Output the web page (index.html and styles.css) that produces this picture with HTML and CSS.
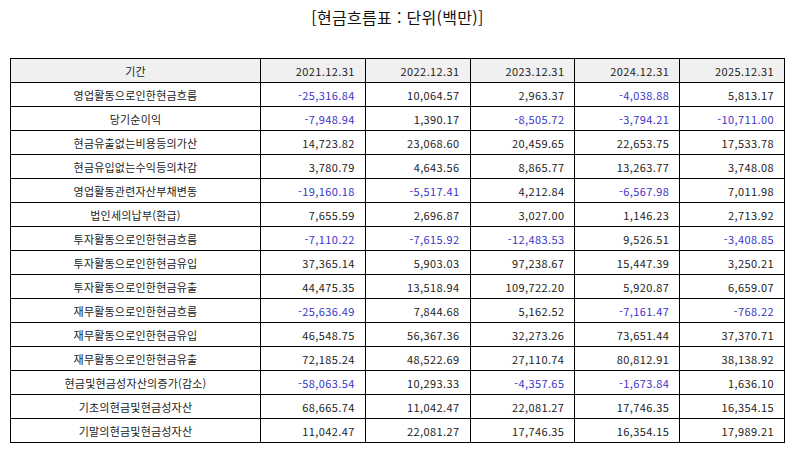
FILE: index.html
```html
<!DOCTYPE html>
<html lang="ko">
<head>
<meta charset="utf-8">
<link rel="stylesheet" href="styles.css">
</head>
<body>
<div class="page">
<h1 class="title">[현금흐름표 : 단위(백만)]</h1>
<table class="cf">
<thead>
<tr><th class="label">기간</th><th>2021.12.31</th><th>2022.12.31</th><th>2023.12.31</th><th>2024.12.31</th><th>2025.12.31</th></tr>
</thead>
<tbody>
<tr><td class="label">영업활동으로인한현금흐름</td><td class="neg">-25,316.84</td><td>10,064.57</td><td>2,963.37</td><td class="neg">-4,038.88</td><td>5,813.17</td></tr>
<tr><td class="label">당기순이익</td><td class="neg">-7,948.94</td><td>1,390.17</td><td class="neg">-8,505.72</td><td class="neg">-3,794.21</td><td class="neg">-10,711.00</td></tr>
<tr><td class="label">현금유출없는비용등의가산</td><td>14,723.82</td><td>23,068.60</td><td>20,459.65</td><td>22,653.75</td><td>17,533.78</td></tr>
<tr><td class="label">현금유입없는수익등의차감</td><td>3,780.79</td><td>4,643.56</td><td>8,865.77</td><td>13,263.77</td><td>3,748.08</td></tr>
<tr><td class="label">영업활동관련자산부채변동</td><td class="neg">-19,160.18</td><td class="neg">-5,517.41</td><td>4,212.84</td><td class="neg">-6,567.98</td><td>7,011.98</td></tr>
<tr><td class="label">법인세의납부(환급)</td><td>7,655.59</td><td>2,696.87</td><td>3,027.00</td><td>1,146.23</td><td>2,713.92</td></tr>
<tr><td class="label">투자활동으로인한현금흐름</td><td class="neg">-7,110.22</td><td class="neg">-7,615.92</td><td class="neg">-12,483.53</td><td>9,526.51</td><td class="neg">-3,408.85</td></tr>
<tr><td class="label">투자활동으로인한현금유입</td><td>37,365.14</td><td>5,903.03</td><td>97,238.67</td><td>15,447.39</td><td>3,250.21</td></tr>
<tr><td class="label">투자활동으로인한현금유출</td><td>44,475.35</td><td>13,518.94</td><td>109,722.20</td><td>5,920.87</td><td>6,659.07</td></tr>
<tr><td class="label">재무활동으로인한현금흐름</td><td class="neg">-25,636.49</td><td>7,844.68</td><td>5,162.52</td><td class="neg">-7,161.47</td><td class="neg">-768.22</td></tr>
<tr><td class="label">재무활동으로인한현금유입</td><td>46,548.75</td><td>56,367.36</td><td>32,273.26</td><td>73,651.44</td><td>37,370.71</td></tr>
<tr><td class="label">재무활동으로인한현금유출</td><td>72,185.24</td><td>48,522.69</td><td>27,110.74</td><td>80,812.91</td><td>38,138.92</td></tr>
<tr><td class="label">현금및현금성자산의증가(감소)</td><td class="neg">-58,063.54</td><td>10,293.33</td><td class="neg">-4,357.65</td><td class="neg">-1,673.84</td><td>1,636.10</td></tr>
<tr><td class="label">기초의현금및현금성자산</td><td>68,665.74</td><td>11,042.47</td><td>22,081.27</td><td>17,746.35</td><td>16,354.15</td></tr>
<tr><td class="label">기말의현금및현금성자산</td><td>11,042.47</td><td>22,081.27</td><td>17,746.35</td><td>16,354.15</td><td>17,989.21</td></tr>
</tbody>
</table>
</div>
</body>
</html>
```
FILE: styles.css
```css
html, body {
  margin: 0;
  padding: 0;
  background: #fff;
}
body {
  font-family: "Noto Sans CJK KR", "Noto Sans", sans-serif;
  color: #222;
}
.page {
  padding: 0 9px 0 10px;
}
.title {
  margin: 0;
  padding-top: 5px;
  height: 58px;
  box-sizing: border-box;
  text-align: center;
  font-size: 16px;
  font-weight: normal;
  line-height: 24px;
  letter-spacing: 0.3px;
  color: #111;
}
.cf {
  width: 775px;
  border-collapse: collapse;
  table-layout: fixed;
  font-size: 11px;
}
.cf th, .cf td {
  border: 1px solid #000;
  height: 23px;
  padding: 0 10px;
  text-align: right;
  font-weight: normal;
  line-height: 14px;
  letter-spacing: 0.4px;
  white-space: nowrap;
}
.cf th {
  background: #f0f0f0;
}
.cf .label {
  width: 250px;
  box-sizing: border-box;
  text-align: center;
  letter-spacing: 0.2px;
}
.cf .neg {
  color: #3a35c8;
}
```
